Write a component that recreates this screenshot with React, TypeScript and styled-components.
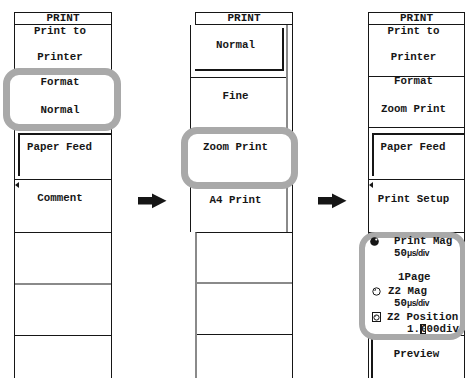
import React from 'react';
import styled, { createGlobalStyle } from 'styled-components';

const INK = '#161616';
const HILITE = '#a9a9a9';
const SOFT = '#8a8a8a';

const Global = createGlobalStyle`
  html, body { margin: 0; padding: 0; background: #ffffff; overflow: hidden; }
  body { font-family: "Liberation Mono", "DejaVu Sans Mono", monospace; color: ${INK}; }
`;

const Stage = styled.div`
  display: flex;
  align-items: flex-start;
  width: 465px;
  height: 378px;
  padding: 12px 0 0 14px;
  box-sizing: border-box;
  overflow: hidden;
`;

const Panel = styled.div<{ $w: number }>`
  flex: none;
  width: ${p => p.$w}px;
  display: flex;
  flex-direction: column;
`;

const Header = styled.div<{ $w: number; $ml?: number }>`
  box-sizing: border-box;
  width: ${p => p.$w}px;
  margin-left: ${p => p.$ml ?? 0}px;
  height: 13px;
  border: 1px solid ${INK};
  font-size: 11px;
  line-height: 11px;
  font-weight: 700;
  text-align: center;
`;

const Body = styled.div`
  display: flex;
  flex-direction: column;
  border-left: 1px solid ${INK};
  border-right: 1px solid ${INK};
`;

type Sep = 'dark' | 'gray' | 'none';

const sepStyle = (s?: Sep) =>
  s === 'gray' ? `2px solid ${SOFT}` : s === 'none' ? 'none' : `1px solid ${INK}`;

const Row = styled.div<{ $h: number; $sep?: Sep; $pt?: number }>`
  position: relative;
  box-sizing: border-box;
  flex: none;
  height: ${p => p.$h}px;
  padding-top: ${p => p.$pt ?? 0}px;
  border-bottom: ${p => sepStyle(p.$sep)};
  display: flex;
  flex-direction: column;
`;

const Label = styled.div<{ $mt?: number; $pr?: number }>`
  position: relative;
  z-index: 2;
  height: 12px;
  line-height: 12px;
  font-size: 10.8px;
  font-weight: 700;
  white-space: pre;
  text-align: center;
  margin-top: ${p => p.$mt ?? 0}px;
  padding-right: ${p => p.$pr ?? 6}px;
`;

const LeftLine = styled.div<{ $mt?: number; $pl: number }>`
  position: relative;
  z-index: 2;
  display: flex;
  align-items: center;
  height: 12px;
  line-height: 12px;
  font-size: 10.8px;
  font-weight: 700;
  white-space: pre;
  margin-top: ${p => p.$mt ?? 0}px;
  padding-left: ${p => p.$pl}px;
`;

const IconSlot = styled.span<{ $w: number }>`
  flex: none;
  display: inline-flex;
  align-items: center;
  width: ${p => p.$w}px;
`;

const Unit = styled.span`
  font-family: "Liberation Sans", "DejaVu Sans", sans-serif;
  font-size: 8.5px;
  letter-spacing: -0.4px;
  font-weight: 700;
`;

const Cursor = styled.span`
  display: inline-block;
  box-sizing: border-box;
  width: 6.5px;
  height: 10px;
  line-height: 9px;
  border: 1px solid ${INK};
  border-left-width: 2px;
  text-indent: -1px;
  overflow: hidden;
  vertical-align: -1px;
`;

const RaisedKey = styled.div<{ $h: number }>`
  box-sizing: border-box;
  height: ${p => p.$h}px;
  margin: 5px 0 0 3px;
  padding-top: 6px;
  border-top: 2px solid ${INK};
  border-left: 2px solid ${INK};
`;

const PressedKey = styled.div`
  box-sizing: border-box;
  height: 43px;
  margin: 3px 2px 0 4px;
  padding-top: 11px;
  border-right: 2px solid ${INK};
  border-bottom: 2px solid ${INK};
`;

const SideKey = styled.div`
  flex: 1;
  margin-left: 2px;
  padding-top: 12px;
  border-left: 2px solid ${INK};
`;

const Marker = styled.span`
  position: absolute;
  top: 2px;
  left: 0;
  width: 0;
  height: 0;
  border-top: 3.5px solid transparent;
  border-bottom: 3.5px solid transparent;
  border-right: 4px solid ${INK};
`;

const Highlight = styled.div<{ $t: number; $l: number; $w: number; $h: number; $bw: number }>`
  position: absolute;
  z-index: 1;
  box-sizing: border-box;
  top: ${p => p.$t}px;
  left: ${p => p.$l}px;
  width: ${p => p.$w}px;
  height: ${p => p.$h}px;
  border: ${p => p.$bw}px solid ${HILITE};
  border-radius: 16px;
  background: #ffffff;
`;

const Upper = styled.div`
  display: flex;
  box-sizing: border-box;
  width: 103px;
  height: 207px;
  border-right: 1px solid ${INK};
`;

const Popup = styled.div`
  box-sizing: border-box;
  width: 98px;
  display: flex;
  flex-direction: column;
  border-left: 1px solid ${INK};
  border-right: 2px solid ${SOFT};
`;

const Lower = styled.div`
  box-sizing: border-box;
  width: 98px;
  margin-left: 5px;
  display: flex;
  flex-direction: column;
  border-top: 1px solid ${INK};
  border-left: 2px solid ${SOFT};
  border-right: 1px solid ${INK};
`;

const ArrowCol = styled.div<{ $w: number; $pl: number }>`
  flex: none;
  width: ${p => p.$w}px;
  padding: 181px 0 0 ${p => p.$pl}px;
  box-sizing: border-box;
  display: flex;
`;

const Arrow = () => (
  <svg width="29" height="16" viewBox="0 0 29 16">
    <polygon points="0,4 14,4 14,0.5 28.5,7.8 14,15.2 14,11.5 0,11.5" fill={INK} />
  </svg>
);

const KnobFilled = () => (
  <svg width="9" height="9" viewBox="0 0 9 9">
    <circle cx="4.5" cy="4.5" r="4.3" fill={INK} />
    <circle cx="6.3" cy="2.5" r="1.1" fill="#fff" />
  </svg>
);

const KnobOpen = () => (
  <svg width="9" height="9" viewBox="0 0 9 9">
    <circle cx="4.5" cy="4.5" r="3.7" fill="none" stroke={INK} strokeWidth="1" />
    <path d="M2.6 3.6 L3.8 2.4" stroke={INK} strokeWidth="1.2" />
  </svg>
);

const KnobBoxed = () => (
  <svg width="9" height="10" viewBox="0 0 9 10">
    <rect x="0.5" y="0.5" width="8" height="9" fill="none" stroke={INK} strokeWidth="1" />
    <circle cx="4.5" cy="5.5" r="2.6" fill="none" stroke={INK} strokeWidth="1" />
    <path d="M3.2 4.6 L4.2 3.6" stroke={INK} strokeWidth="1" />
  </svg>
);

const Rate = () => (
  <>
    50<Unit>μs/div</Unit>
  </>
);

export default function App() {
  return (
    <>
      <Global />
      <Stage>
        {/* Panel 1 */}
        <Panel $w={98}>
          <Header $w={98}>PRINT</Header>
          <Body>
            <Row $h={52}>
              <Label>Print to</Label>
              <Label $mt={14}>Printer</Label>
            </Row>
            <Row $h={51}>
              <Highlight $t={-9} $l={-12} $w={118} $h={63} $bw={7} />
              <Label $mt={-1}>Format</Label>
              <Label $mt={16}>Normal</Label>
            </Row>
            <Row $h={52}>
              <RaisedKey $h={43}>
                <Label $pr={12}>Paper Feed</Label>
              </RaisedKey>
            </Row>
            <Row $h={53} $pt={12}>
              <Marker />
              <Label>Comment</Label>
            </Row>
            <Row $h={52} $sep="gray" />
            <Row $h={51} />
            <Row $h={50} $sep="none" />
          </Body>
        </Panel>

        <ArrowCol $w={78} $pl={26}>
          <Arrow />
        </ArrowCol>

        {/* Panel 2 */}
        <Panel $w={103}>
          <Header $w={98} $ml={5}>PRINT</Header>
          <Upper>
            <Popup>
              <Row $h={53}>
                <PressedKey>
                  <Label>Normal</Label>
                </PressedKey>
              </Row>
              <Row $h={51} $pt={12}>
                <Label>Fine</Label>
              </Row>
              <Row $h={52} $pt={12}>
                <Highlight $t={-2} $l={-10} $w={117} $h={62} $bw={7} />
                <Label>Zoom Print</Label>
              </Row>
              <Row $h={51} $pt={13} $sep="none">
                <Label>A4 Print</Label>
              </Row>
            </Popup>
          </Upper>
          <Lower>
            <Row $h={51} $sep="gray" />
            <Row $h={51} />
            <Row $h={50} $sep="none" />
          </Lower>
        </Panel>

        <ArrowCol $w={75} $pl={25}>
          <Arrow />
        </ArrowCol>

        {/* Panel 3 */}
        <Panel $w={97}>
          <Header $w={97}>PRINT</Header>
          <Body>
            <Row $h={52}>
              <Label>Print to</Label>
              <Label $mt={14}>Printer</Label>
            </Row>
            <Row $h={51}>
              <Label $mt={-2}>Format</Label>
              <Label $mt={16}>Zoom Print</Label>
            </Row>
            <Row $h={52}>
              <RaisedKey $h={43}>
                <Label $pr={12}>Paper Feed</Label>
              </RaisedKey>
            </Row>
            <Row $h={53} $pt={13}>
              <Marker />
              <Label>Print Setup</Label>
            </Row>
            <Row $h={51}>
              <Highlight $t={-1} $l={-10} $w={107} $h={108} $bw={6} />
              <LeftLine $pl={1} $mt={2}>
                <IconSlot $w={24}>
                  <KnobFilled />
                </IconSlot>
                Print Mag
              </LeftLine>
              <LeftLine $pl={25}>
                <Rate />
              </LeftLine>
              <LeftLine $pl={29} $mt={12}>
                1Page
              </LeftLine>
            </Row>
            <Row $h={52}>
              <LeftLine $pl={3} $mt={1}>
                <IconSlot $w={16}>
                  <KnobOpen />
                </IconSlot>
                Z2 Mag
              </LeftLine>
              <LeftLine $pl={25}>
                <Rate />
              </LeftLine>
              <LeftLine $pl={3} $mt={2}>
                <IconSlot $w={15}>
                  <KnobBoxed />
                </IconSlot>
                Z2 Position
              </LeftLine>
              <LeftLine $pl={38}>
                1.<Cursor>0</Cursor>00div
              </LeftLine>
            </Row>
            <Row $h={50} $sep="none">
              <SideKey>
                <Label $pr={4}>Preview</Label>
              </SideKey>
            </Row>
          </Body>
        </Panel>
      </Stage>
    </>
  );
}
